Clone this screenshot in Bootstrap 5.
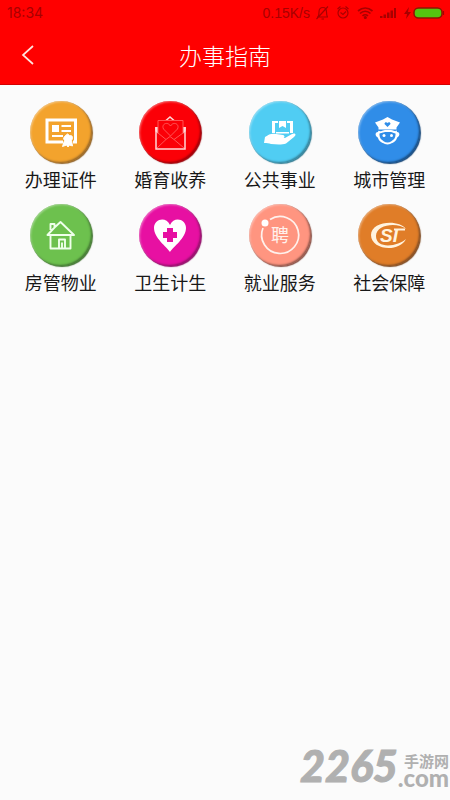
<!DOCTYPE html>
<html lang="zh-CN">
<head>
<meta charset="utf-8">
<meta name="viewport" content="width=device-width, initial-scale=1">
<title>办事指南</title>
<link href="https://cdn.jsdelivr.net/npm/bootstrap@5.3.0/dist/css/bootstrap.min.css" rel="stylesheet">
<style>
body { font-family: "Noto Sans CJK SC", sans-serif; background: #fbfbfb; }
.app-header { background: #f00; border-bottom: 1px solid #d40000; }
.status-bar { height: 26px; padding: 0 2px 0 7px; color: #a80000; font: 14px/26px "Inter", sans-serif; }
.status-bar .speed { font: 14px/26px "Liberation Sans", sans-serif; }
.title-bar { height: 58px; display: grid; grid-template-columns: 56px 1fr 56px; align-items: center; }
.title-bar h1 { font-size: 23px; line-height: 32px; font-weight: 300; }
.back-btn { height: 56px; }
.services { padding: 16px 6px; row-gap: 13px; }
.service { color: #181818; font-size: 18px; line-height: 24px; }
.disc { width: 62px; height: 62px; margin-bottom: 4px; background: var(--disc); box-shadow: 1px 1px 1px var(--edge), inset -1px -1px 2px var(--edge), inset 1px 1px 2px #ffffff66; }
.disc svg { display: block; }
.orange { --disc: #f3a32d; --edge: #916328; }
.red { --disc: #fb0007; --edge: #980008; }
.cyan { --disc: #50cdf3; --edge: #347c92; }
.azure { --disc: #308de8; --edge: #174778; }
.leaf { --disc: #6dc14e; --edge: #427333; }
.magenta { --disc: #e710a2; --edge: #8e1167; }
.salmon { --disc: #ff9580; --edge: #875147; }
.amber { --disc: #e07d28; --edge: #7e4b24; }
.glyph-text { font-family: "Noto Sans CJK SC", sans-serif; font-size: 18px; }
.logo-text { font: italic 700 19px "Liberation Sans", sans-serif; }
.brand { color: #b0b0b0; padding: 0 1px 13px 0; }
.brand-number { font: italic 900 43px/43px "Lato", sans-serif; -webkit-text-stroke: 1px #b0b0b0; }
.brand-cn { font-size: 15px; line-height: 16px; font-weight: 700; }
.brand-com { font: 900 24px/18px "Lato", sans-serif; }
</style>
<script src="https://cdn.jsdelivr.net/npm/bootstrap@5.3.0/dist/js/bootstrap.bundle.min.js"></script>
</head>
<body class="d-flex flex-column min-vh-100">
<header class="app-header">
  <div class="status-bar d-flex align-items-center justify-content-between">
    <time>18:34</time>
    <div class="d-flex align-items-center">
      <span class="speed me-1">0.15K/s</span>
      <svg width="134" height="18" viewBox="0 0 134 18" fill="none" stroke="#a80000" stroke-width="1.2" aria-hidden="true">
        <path d="M3 13h11M4 13c1-2 1-3 1-5 0-3 1.500-4.500 4-4.500S12.500 5 12.500 8c0 2 0 3 1 5M7.500 15h2.500M2.500 15L14 2.500"/>
        <circle cx="29" cy="9" r="5"/><path d="M23.500 5l3-2.500M31.500 2.500l3 2.500M26.500 8.500l2.500 2 3-3"/>
        <path d="M44 7c4.500-4 10-4 14.500 0M46 9.500c3-3 7.500-3 10.500 0M48.500 12c1.500-1.500 4-1.500 5.500 0" stroke-width="1.700"/><circle cx="51.300" cy="13.500" r="1" fill="#a80000"/>
        <g fill="#a80000" stroke="none"><path d="M66 14v-2h2.500v2zM69.500 14v-3.500H72V14zM73 14V8.500h2.500V14zM76.500 14V6.500H79V14zM80 14V4h2v10zM95 3l-5 7h3l-1 5 5-7h-3z"/></g>
        <rect x="100" y="4" width="28" height="10" rx="4.500" fill="#54c510" stroke="#8c1600" stroke-width="1.500"/>
        <path d="M129.500 7v4"/>
      </svg>
    </div>
  </div>
  <div class="title-bar">
    <button class="back-btn btn p-0 border-0 d-flex align-items-center justify-content-center" type="button" aria-label="返回">
      <svg width="14" height="22" viewBox="0 0 14 22" fill="none" stroke="#ffe4df" stroke-width="1.700"><path d="M12 2L2 11l10 9"/></svg>
    </button>
    <h1 class="m-0 text-center text-white">办事指南</h1>
  </div>
</header>
<main class="flex-grow-1">
  <nav class="services row row-cols-4 g-0" aria-label="办事指南">
    <a class="service col d-flex flex-column align-items-center text-decoration-none" href="#certificates">
      <span class="disc orange rounded-circle"><svg width="62" height="62" viewBox="0 0 62 62" fill="none" stroke="#fff"><path d="M33 41H17V19h28.500v22H43" stroke-width="3"/><path d="M22 24h7v7h-7z" fill="#fff" stroke="none"/><path d="M31.500 25H41M31.500 30H41M22 35h11" stroke-width="2"/><path d="M37.500 33l2 1.500 2.500.5.500 2.500-1 2 1 5.500-3-1-1.500 2-1.500-2-4 1.500 2-6-1-2 1-2z" fill="#fff" stroke-width="1"/></svg></span>
      <span>办理证件</span>
    </a>
    <a class="service col d-flex flex-column align-items-center text-decoration-none" href="#family">
      <span class="disc red rounded-circle"><svg width="62" height="62" viewBox="0 0 62 62" fill="none" stroke="#ffd8d8"><path d="M17 27v21h29V27" stroke-width="1.500"/><path d="M16 26h3v6.500l-2.500-2zM47 26h-3v6.500l2.500-2z" fill="#ffd8d8" stroke="none"/><path d="M27 19.500l4-3.500 4 3.500" stroke-width="1.600"/><g stroke="#ff5555" stroke-width="1"><path d="M19 32V19.500h25V32L35 38.500l-4-3-4 3zM18 47l9-8.500M45 47l-10-8.500"/><path d="M31.500 35l-7-7c-2.500-5 4-8 7-3 3-5 9.500-2 7 3z"/></g></svg></span>
      <span>婚育收养</span>
    </a>
    <a class="service col d-flex flex-column align-items-center text-decoration-none" href="#utilities">
      <span class="disc cyan rounded-circle"><svg width="62" height="62" viewBox="0 0 62 62" fill="#fff"><path d="M23 20h3v12h-3zM41 20h3v12h-3zM23 20h6v2h-6zM38 20h6v2h-6zM30 20h7v7l-3.500-2-3.500 2zM27 31h13v1.500H27z"/><path d="M16 36c4-3 7-4 11-3l7 1c2 .5 2 3 0 3h-6 8l7-4c3-1.500 5 .5 2 3l-8 6.500c-4 1.500-10 1-15 .5-2-1-4-1-7-1z"/></svg></span>
      <span>公共事业</span>
    </a>
    <a class="service col d-flex flex-column align-items-center text-decoration-none" href="#city">
      <span class="disc azure rounded-circle"><svg width="62" height="62" viewBox="0 0 62 62"><path fill="#fff" d="M17 21.500l8-3 4.500-2.500 4.500 2.500 8 3-3.500 5v2h-18v-2z"/><path fill="#308de8" d="M29.500 26l-3-3c0-2 2-2.500 3-1 1-1.500 3-1 3 1z"/><path d="M21 31c2 1 4-1 6-1h6c2 0 4 2 5 1 1 2 1 8-4 10-3 2-6 2-9 0-5-2-5-8-4-10z" fill="none" stroke="#fff" stroke-width="2"/><path d="M20.500 31c-4-.5-4 5 1 6zM38.500 31c4-.5 4 5-1 6z" fill="#fff"/><circle cx="26" cy="34.500" r="1.500" fill="#fff"/><circle cx="33.500" cy="34.500" r="1.500" fill="#fff"/></svg></span>
      <span>城市管理</span>
    </a>
    <a class="service col d-flex flex-column align-items-center text-decoration-none" href="#housing">
      <span class="disc leaf rounded-circle"><svg width="62" height="62" viewBox="0 0 62 62" fill="none" stroke="#efffeb" stroke-width="1.900" stroke-linejoin="round"><path d="M20.500 26v-6h4v3.500l6-5.500L44 31H17.500l7-7.500M20.500 31v13.500h20V31M29 44V35.500h6V44M32 38.500V44"/></svg></span>
      <span>房管物业</span>
    </a>
    <a class="service col d-flex flex-column align-items-center text-decoration-none" href="#health">
      <span class="disc magenta rounded-circle"><svg width="62" height="62" viewBox="0 0 62 62"><path fill="#fff" d="M31 48C28 43 15 34 15 24c0-9 12-12 16-3 4-9 16-6 16 3 0 10-13 19-16 24z"/><path fill="#e710a2" d="M28 24h6v4h4v6h-4v4h-6v-4h-4v-6h4z"/></svg></span>
      <span>卫生计生</span>
    </a>
    <a class="service col d-flex flex-column align-items-center text-decoration-none" href="#jobs">
      <span class="disc salmon rounded-circle"><svg width="62" height="62" viewBox="0 0 62 62"><path d="M21 15.500A18.500 18.500 0 1 1 14 24" fill="none" stroke="#fff1ec" stroke-width="1.700"/><circle cx="16" cy="19" r="3.500" fill="#fff"/><text class="glyph-text" x="31" y="38" text-anchor="middle" fill="#fff1ec">聘</text></svg></span>
      <span>就业服务</span>
    </a>
    <a class="service col d-flex flex-column align-items-center text-decoration-none" href="#social">
      <span class="disc amber rounded-circle"><svg width="62" height="62" viewBox="0 0 62 62"><path fill="#fff3df" d="M48 25C41 15 13 17 13 31c0 15 28 18 35 4-7 7-30 11-30-3 0-12 22-14 30-7z"/><text class="logo-text" x="22" y="38" fill="#fff3df">SI</text><path d="M36 25.500h11" stroke="#fff3df" stroke-width="2"/></svg></span>
      <span>社会保障</span>
    </a>
  </nav>
</main>
<footer class="brand d-flex justify-content-end align-items-end">
  <span class="brand-number">2265</span>
  <span class="d-flex flex-column align-items-end"><span class="brand-cn">手游网</span><span class="brand-com">.com</span></span>
</footer>
</body>
</html>
